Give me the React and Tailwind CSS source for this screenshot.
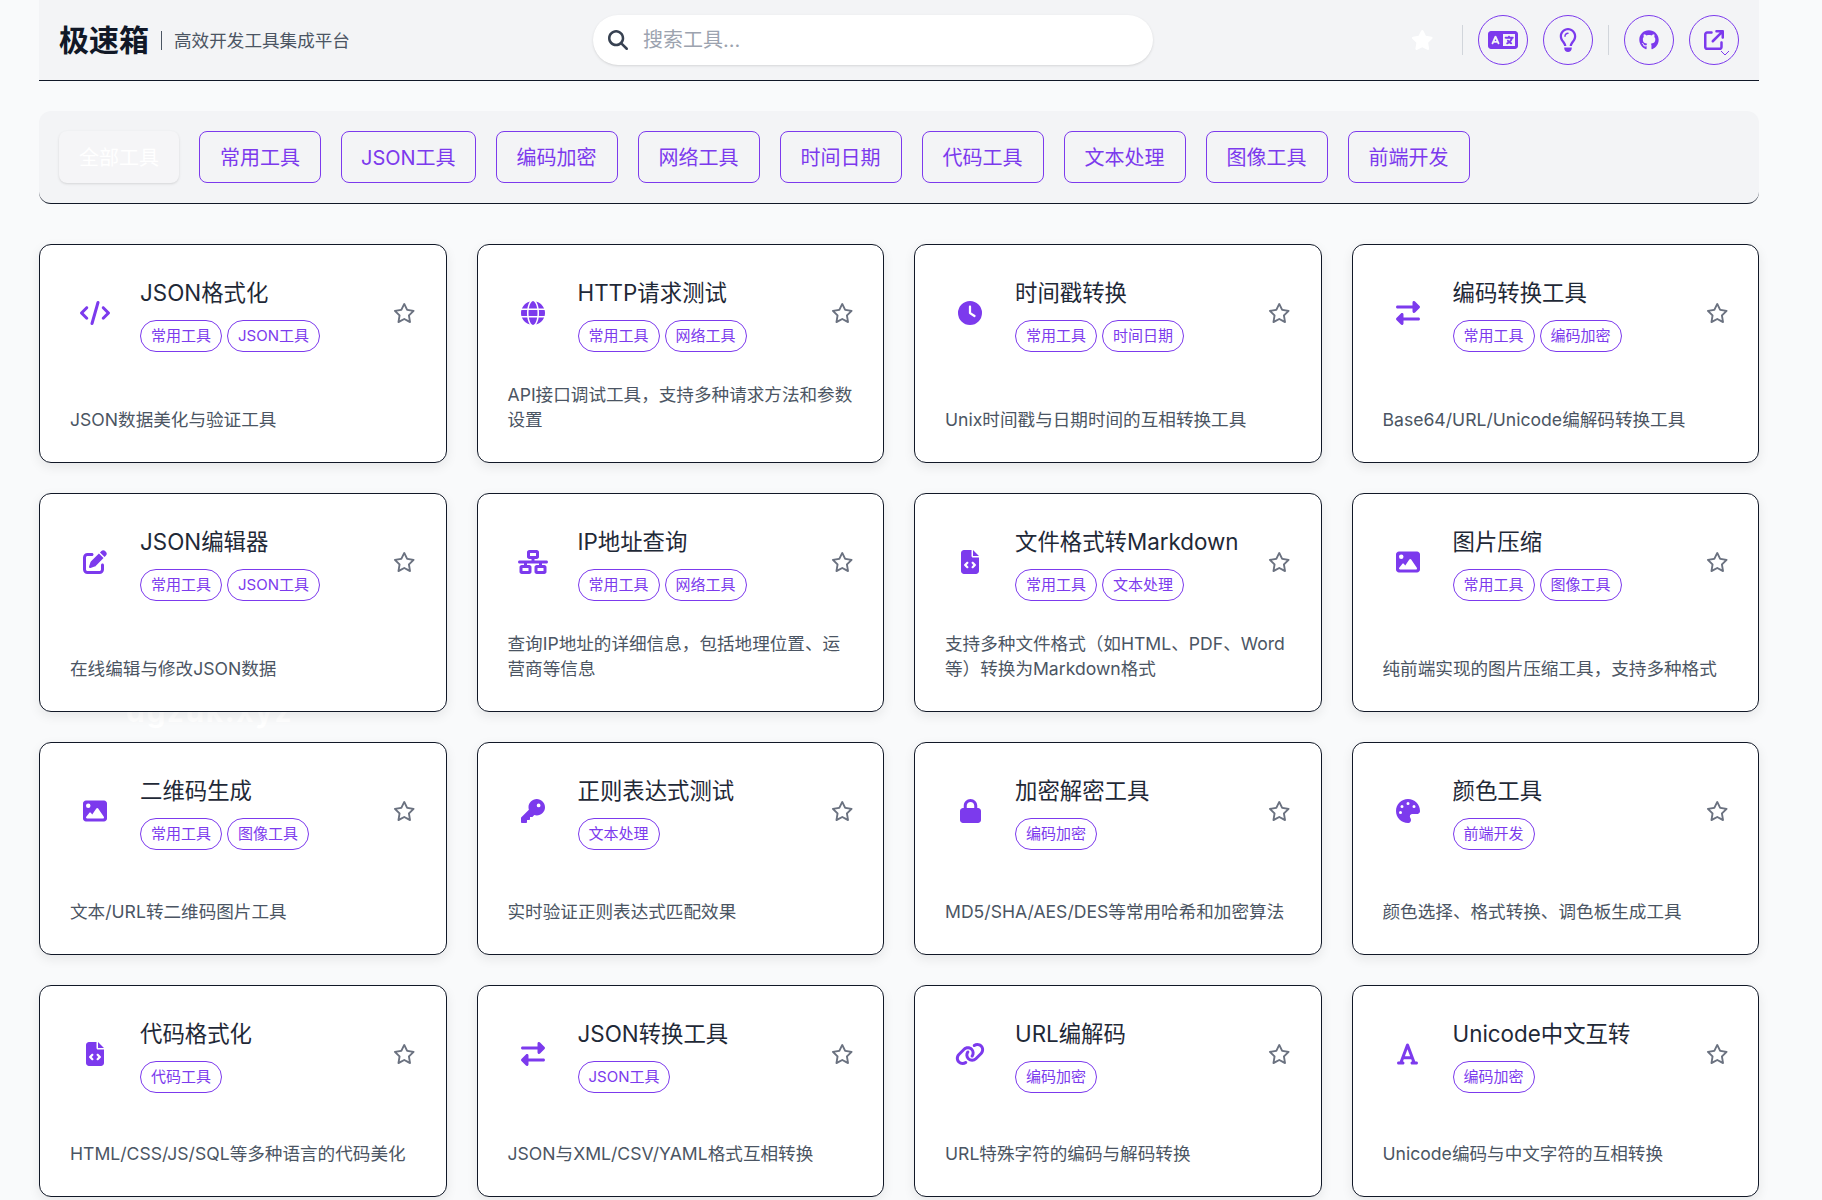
import { FaCode, FaGlobe, FaClock, FaRightLeft, FaPenToSquare, FaNetworkWired, FaFileCode, FaImage, FaKey, FaLock, FaPalette, FaLink, FaFont, FaRegStar, FaStar, FaMagnifyingGlass, FaLanguage, FaRegLightbulb, FaGithub, FaArrowUpRightFromSquare } from "react-icons/fa6";

const categories = ["常用工具", "JSON工具", "编码加密", "网络工具", "时间日期", "代码工具", "文本处理", "图像工具", "前端开发"];

const tools = [
  { name: "JSON格式化", icon: <FaCode className="h-6 w-[30px]" />, tags: ["常用工具", "JSON工具"], desc: "JSON数据美化与验证工具" },
  { name: "HTTP请求测试", icon: <FaGlobe className="h-6 w-6" />, tags: ["常用工具", "网络工具"], desc: "API接口调试工具，支持多种请求方法和参数设置" },
  { name: "时间戳转换", icon: <FaClock className="h-6 w-6" />, tags: ["常用工具", "时间日期"], desc: "Unix时间戳与日期时间的互相转换工具" },
  { name: "编码转换工具", icon: <FaRightLeft className="h-6 w-6" />, tags: ["常用工具", "编码加密"], desc: "Base64/URL/Unicode编解码转换工具" },
  { name: "JSON编辑器", icon: <FaPenToSquare className="h-6 w-6" />, tags: ["常用工具", "JSON工具"], desc: "在线编辑与修改JSON数据" },
  { name: "IP地址查询", icon: <FaNetworkWired className="h-6 w-[30px]" />, tags: ["常用工具", "网络工具"], desc: "查询IP地址的详细信息，包括地理位置、运营商等信息" },
  { name: "文件格式转Markdown", icon: <FaFileCode className="h-6 w-[18px]" />, tags: ["常用工具", "文本处理"], desc: "支持多种文件格式（如HTML、PDF、Word等）转换为Markdown格式" },
  { name: "图片压缩", icon: <FaImage className="h-6 w-6" />, tags: ["常用工具", "图像工具"], desc: "纯前端实现的图片压缩工具，支持多种格式" },
  { name: "二维码生成", icon: <FaImage className="h-6 w-6" />, tags: ["常用工具", "图像工具"], desc: "文本/URL转二维码图片工具" },
  { name: "正则表达式测试", icon: <FaKey className="h-6 w-6" />, tags: ["文本处理"], desc: "实时验证正则表达式匹配效果" },
  { name: "加密解密工具", icon: <FaLock className="h-6 w-[21px]" />, tags: ["编码加密"], desc: "MD5/SHA/AES/DES等常用哈希和加密算法" },
  { name: "颜色工具", icon: <FaPalette className="h-6 w-6" />, tags: ["前端开发"], desc: "颜色选择、格式转换、调色板生成工具" },
  { name: "代码格式化", icon: <FaFileCode className="h-6 w-[18px]" />, tags: ["代码工具"], desc: "HTML/CSS/JS/SQL等多种语言的代码美化" },
  { name: "JSON转换工具", icon: <FaRightLeft className="h-6 w-6" />, tags: ["JSON工具"], desc: "JSON与XML/CSV/YAML格式互相转换" },
  { name: "URL编解码", icon: <FaLink className="h-6 w-[30px]" />, tags: ["编码加密"], desc: "URL特殊字符的编码与解码转换" },
  { name: "Unicode中文互转", icon: <FaFont className="h-6 w-[21px]" />, tags: ["编码加密"], desc: "Unicode编码与中文字符的互相转换" },
];

const CircleButton = ({ children }) => (
  <button className="relative flex h-[50px] w-[50px] items-center justify-center rounded-full border border-[#7c3aed] text-[#7c3aed]">
    {children}
  </button>
);

const ToolCard = ({ tool }) => (
  <div className="relative z-10 flex flex-col justify-between rounded-xl border border-[#111827] bg-white p-[30px] shadow-[0_4px_12px_rgba(0,0,0,0.08)]">
    <div className="flex items-center">
      <div className="flex w-[50px] shrink-0 justify-center pb-0.5 text-[#7c3aed]">{tool.icon}</div>
      <div className="ml-5 min-w-0 flex-1">
        <h3 className="mb-2.5 pt-px text-[22.4px] leading-[34px] text-[#1f2937]">{tool.name}</h3>
        <div className="flex gap-[5px]">
          {tool.tags.map((tag) => (
            <span key={tag} className="flex h-8 items-center rounded-full border border-[#7c3aed] px-2.5 text-[15px] text-[#7c3aed]">
              {tag}
            </span>
          ))}
        </div>
      </div>
      <div className="shrink-0 pb-0.5 text-[#6b7280]">
        <FaRegStar className="h-5 w-[22.5px]" />
      </div>
    </div>
    <p className="mt-[30px] text-[17.6px] leading-[25px] text-[#4b5563]">{tool.desc}</p>
  </div>
);

export default function App() {
  return (
    <div className="min-h-screen bg-[#f9fafb] pl-[39px] pr-[63px] font-['Inter','Noto_Sans_CJK_SC',sans-serif]">
      <header className="flex h-[81px] items-center border-b border-[#111827] bg-[#f3f4f6] px-5">
        <div className="flex w-[534px] shrink-0 items-center">
          <h1 className="text-3xl font-bold text-[#111827]">极速箱</h1>
          <span className="ml-3 border-l border-[#4b5563] pl-3 pt-px text-[17.6px] leading-[18px] text-[#4b5563]">高效开发工具集成平台</span>
        </div>
        <div className="relative h-[50px] w-[560px] shrink-0">
          <FaMagnifyingGlass className="absolute left-[15px] top-[15px] text-xl text-[#374151]" />
          <input
            placeholder="搜索工具..."
            className="h-full w-full rounded-full bg-white pl-[50px] pr-5 text-xl shadow-sm outline-none placeholder:text-[#9ca3af]"
          />
        </div>
        <div className="ml-auto flex items-center">
          <FaStar className="mr-[29px] h-5 w-[22.5px] text-white" />
          <div className="mr-[15px] h-[30px] w-px bg-[#d1d5db]" />
          <div className="flex gap-[15px]">
            <CircleButton><FaLanguage className="h-6 w-[30px]" /></CircleButton>
            <CircleButton><FaRegLightbulb className="h-6 w-[18px]" /></CircleButton>
          </div>
          <div className="mx-[15px] h-[30px] w-px bg-[#d1d5db]" />
          <div className="flex gap-[15px]">
            <CircleButton><FaGithub className="h-5 w-5" /></CircleButton>
            <CircleButton>
              <FaArrowUpRightFromSquare className="h-5 w-5" />
              <svg className="absolute bottom-[7px] right-[8px]" width="10" height="7" viewBox="0 0 10 7" fill="none" stroke="#7c3aed" strokeWidth="1">
                <path d="M1 1l4 4 4-4" />
              </svg>
            </CircleButton>
          </div>
        </div>
      </header>

      <nav className="mt-[30px] flex gap-5 rounded-xl border-b border-[#111827] bg-[#f3f4f6] px-5 py-5">
        <button className="h-[52px] rounded-lg bg-[#f5f5f7] px-5 pt-px text-xl text-white shadow-sm">全部工具</button>
        {categories.map((c) => (
          <button key={c} className={c === "JSON工具" ? "h-[52px] rounded-lg border border-[#7c3aed] px-[19px] pt-px text-xl text-[#7c3aed]" : "h-[52px] rounded-lg border border-[#7c3aed] px-5 pt-px text-xl text-[#7c3aed]"}>
            {c}
          </button>
        ))}
      </nav>

      <main className="relative mt-10 grid grid-cols-4 grid-rows-[auto_auto_213px_211.5px] gap-[30px]">
        <span className="absolute left-[87px] top-[449px] text-3xl font-bold tracking-wider text-white">dgzuk.xyz</span>
        {tools.map((tool) => (
          <ToolCard key={tool.name} tool={tool} />
        ))}
      </main>
    </div>
  );
}
